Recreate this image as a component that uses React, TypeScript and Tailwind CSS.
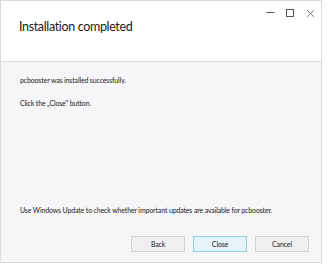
export default function App() {
  return (
    <div className="w-[328px] h-[264px] bg-white" style={{ fontFamily: 'Lato, "Noto Sans", sans-serif' }}>
      <div className="w-[322px] h-[263px] border border-[#d9d9d9] flex flex-col">
        {/* header */}
        <div className="h-[61px] bg-white border-b border-[#dcdcdc] flex justify-between shrink-0">
          <h1 className="pl-[18px] pt-[17px] text-[12.5px] tracking-[-0.35px] text-[#1a1a1a] leading-[18px]">Installation completed</h1>
          <div className="flex items-start gap-[11px] pt-[7px] pr-[6px]">
            <svg width="9" height="9" viewBox="0 0 9 9" className="mt-[0px]">
              <path d="M0.5 4.5H8.5" stroke="#555" strokeWidth="1" />
            </svg>
            <svg width="9" height="9" viewBox="0 0 9 9" className="mt-[1px]">
              <rect x="0.5" y="0.5" width="7" height="7" fill="none" stroke="#555" strokeWidth="1" />
            </svg>
            <svg width="9" height="9" viewBox="0 0 9 9" className="mt-[1px]">
              <path d="M1 1L8 8M8 1L1 8" stroke="#666" strokeWidth="0.8" />
            </svg>
          </div>
        </div>
        {/* body */}
        <div className="flex-1 bg-[#f6f6f8] flex flex-col px-[19px] text-[7px] tracking-[-0.15px] text-[#222]">
          <p className="mt-[13px] leading-[10px]">pcbooster was installed successfully.</p>
          <p className="mt-[13px] leading-[10px]">Click the „Close" button.</p>
          <p className="mt-auto leading-[10px] whitespace-nowrap">Use Windows Update to check whether important updates are available for pcbooster.</p>
          <div className="flex justify-end gap-[8px] mt-[21px] mb-[10px] -mr-[7px]">
            <button className="w-[54px] h-[16px] bg-[#efefef] border border-[#d4d4d4] text-[7px] text-[#222]">Back</button>
            <button className="w-[54px] h-[16px] bg-[#e4f3f7] border border-[#8fd0dc] text-[7px] text-[#222]">Close</button>
            <button className="w-[54px] h-[16px] bg-[#efefef] border border-[#d4d4d4] text-[7px] text-[#222]">Cancel</button>
          </div>
        </div>
      </div>
    </div>
  );
}
